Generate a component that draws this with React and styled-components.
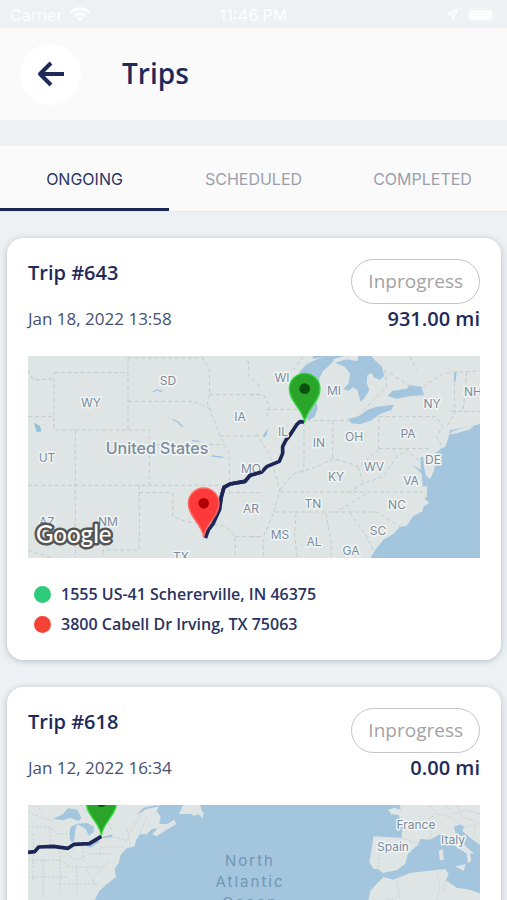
import React, { useState } from "react";
import styled, { createGlobalStyle } from "styled-components";

const GlobalStyle = createGlobalStyle`
  * { box-sizing: border-box; }
  body {
    margin: 0;
    background: #edf1f4;
    font-family: 'Open Sans', 'Noto Sans', sans-serif;
    color: #1f2a5a;
  }
  button {
    font: inherit;
    border: none;
    padding: 0;
    cursor: pointer;
  }
  h1, h2, p, ul { margin: 0; padding: 0; font-weight: inherit; }
`;
const Screen = styled.div`
  display: flex;
  flex-direction: column;
  height: 100vh;
`;
const StatusBar = styled.div`
  display: grid;
  grid-template-columns: 1fr auto 1fr;
  align-items: center;
  flex: none;
  height: 28px;
  padding: 1px 10px 0;
  color: #fcfdfd;
  font-family: Inter, sans-serif;
  font-size: 16px;
`;
const StatusSide = styled.div`
  display: flex;
  align-items: center;
  justify-content: ${props => props.$end ? "flex-end" : "flex-start"};
  gap: 8px;
`;
const Clock = styled.span`
  font-weight: 500;
`;
const Header = styled.header`
  display: flex;
  align-items: center;
  flex: none;
  gap: 41px;
  height: 92px;
  padding: 0 20px;
  background: #fafafa;
`;
const BackButton = styled.button`
  display: flex;
  align-items: center;
  justify-content: center;
  width: 61px;
  height: 61px;
  border-radius: 50%;
  background: #fff;
`;
const Title = styled.h1`
  padding-bottom: 3px;
  font-size: 28px;
  line-height: 36px;
  font-weight: 600;
`;
const Tabs = styled.div`
  display: flex;
  flex: none;
  height: 66px;
  margin-top: 26px;
  background: #fafafa;
  border-bottom: 1px solid #e6e9ed;
`;
const Tab = styled.button`
  flex: 1;
  background: none;
  font-family: Inter, sans-serif;
  font-size: 16px;
  color: ${props => props.$active ? "#2b3563" : "#9a9fae"};
  border-top: 3px solid transparent;
  border-bottom: 3px solid ${props => props.$active ? "#1c2753" : "transparent"};
`;
const List = styled.main`
  display: flex;
  flex-direction: column;
  flex: 1;
  gap: 27px;
  min-height: 0;
  padding: 26px 6px 26px 7px;
  overflow-y: auto;
  scrollbar-width: none;
`;
const Card = styled.article`
  flex: none;
  padding: 21px;
  background: #fff;
  border-radius: 16px;
  box-shadow: 0 1px 6px rgba(60, 70, 80, 0.3);
`;
const CardHead = styled.div`
  display: flex;
  justify-content: space-between;
  padding-bottom: 23px;
`;
const HeadColumn = styled.div`
  display: flex;
  flex-direction: column;
  align-items: ${props => props.$end ? "flex-end" : "flex-start"};
  gap: ${props => props.$end ? "0" : "20px"};
`;
const TripName = styled.h2`
  font-size: 20px;
  line-height: 28px;
  font-weight: 600;
`;
const TripDate = styled.p`
  font-size: 17px;
  line-height: 24px;
  color: #474f72;
`;
const Badge = styled.span`
  padding: 6px 16px;
  border: 1px solid #c4c4c4;
  border-radius: 24px;
  font-size: 19px;
  line-height: 31px;
  color: #a3a3a3;
`;
const Miles = styled.p`
  font-size: 20px;
  line-height: 29px;
  font-weight: 600;
`;
const MapView = styled.svg`
  display: block;
  width: 100%;
  height: 202px;
`;
const MapLabel = styled.text`
  font-family: Inter, sans-serif;
  font-size: ${props => props.$size || 12}px;
  font-weight: ${props => props.$bold ? 500 : 400};
  fill: #7c8b9b;
  stroke: #f1f5f5;
  stroke-width: 3px;
  stroke-linejoin: round;
  paint-order: stroke;
  text-anchor: middle;
  dominant-baseline: central;
`;
const OceanLabel = styled.text`
  font-family: Inter, sans-serif;
  font-size: 15px;
  letter-spacing: 2px;
  fill: #7496b2;
  text-anchor: middle;
  dominant-baseline: central;
`;
const GoogleLabel = styled.text`
  font-family: Lato, sans-serif;
  font-size: 24px;
  font-weight: 500;
  fill: #fff;
  stroke: #555;
  stroke-width: 5px;
  stroke-linejoin: round;
  paint-order: stroke;
`;
const Stops = styled.ul`
  display: flex;
  flex-direction: column;
  gap: 6px;
  padding: 24px 6px 3px;
  list-style: none;
`;
const Stop = styled.li`
  display: flex;
  align-items: center;
  gap: 10px;
  font-size: 16px;
  line-height: 24px;
  font-weight: 600;
  color: #2a3360;
  &::before {
    content: "";
    width: 17px;
    height: 17px;
    border-radius: 50%;
    background: ${props => props.$color};
  }
`;

const LAND = "#dee5e4";
const WATER = "#a3c5de";

const states = [
  ["SD", 140, 24], ["WY", 63, 46], ["UT", 19, 101], ["AZ", 19, 165], ["NM", 80, 165],
  ["IA", 212, 60], ["MO", 223, 112], ["AR", 223, 152], ["TX", 153, 200], ["WI", 254, 21],
  ["MI", 306, 34], ["IL", 255, 75], ["IN", 291, 86], ["OH", 326, 80], ["PA", 380, 77],
  ["NY", 404, 47], ["NH", 445, 35], ["DE", 405, 103], ["WV", 346, 110], ["KY", 308, 120],
  ["VA", 383, 124], ["TN", 285, 147], ["NC", 369, 148], ["SC", 350, 174], ["MS", 252, 178],
  ["AL", 286, 185], ["GA", 323, 194],
];

// x and y are the tip of the pin
function Pin({ x, y, fill, edge, dot }) {
  return (
    <g transform={`translate(${x} ${y})`}>
      <path
        d="M0 0C-3 -38 -46 -62 -46 -102A46 46 0 0 1 46 -102C46 -62 3 -38 0 0Z"
        fill={fill}
        stroke={edge}
        strokeWidth="4"
      />
      <circle cy="-102" r="16" fill={dot} />
    </g>
  );
}

function StatesMap() {
  return (
    <MapView viewBox="0 0 452 202" preserveAspectRatio="xMidYMid slice" role="img" aria-label="Route map">
      <rect width="452" height="202" fill={LAND} />
      <g transform="scale(0.33333)" fill="none">
        {/* lakes and ocean */}
        <g transform="translate(666 -18)" fill={WATER}>
          <path d="M148 66L168 44L200 28L228 20L252 30L240 44L220 62L208 84L206 110L196 140L203 175L194 200L178 210L164 204L150 120Z" />
          <path d="M186 16H290L262 24L240 32L222 22L190 26Z" />
          <path d="M256 38L290 28L322 34L326 16H362L374 30L396 50L402 78L390 90L372 82L364 68L352 76L350 98L358 120L345 142L332 156L322 120L308 112L296 122L280 118L296 100L300 70L284 50Z" />
          <path d="M294 206L318 202L330 196L352 180L380 170L432 164L424 180L390 192L362 212L330 222L304 220Z" />
          <path d="M412 138L428 122L470 116L480 106L515 110L522 136L480 138L440 146Z" />
          <path d="M690 222L650 232L600 240L596 262L586 290L572 296L556 310L556 340L552 362L540 388L528 376L532 410L530 440L524 446L538 458L520 470L518 484L490 498L470 528L450 530L430 552L400 570L376 600L360 626H692V222Z" />
          <path d="M512 320L520 322L522 350L528 380L532 408L518 410L516 372L488 346L512 360Z" />
          <path d="M612 64L620 66L616 100L612 90ZM38 258L54 234L50 254L42 264Z" />
          <path d="M596 254L610 242L672 226L660 238L620 250Z" fill={LAND} />
        </g>
        <g transform="translate(-24 -18)">
          <path d="M42 218L60 228L64 244L50 246Z" fill="#8fc0d8" />
          <path d="M398 126L410 120L428 124M458 208L474 216L488 230M516 272L538 274M576 318L610 322" stroke="#9fc3e2" strokeWidth="4" />
        </g>

        {/* state lines */}
        <g stroke="#c3cbcd" strokeWidth="3" strokeDasharray="12 8">
          <path
            transform="translate(-24 -18)"
            d="M102 68H324V240H102ZM24 60L40 90L102 86M24 200H102M324 24H548L568 60V134L562 160L574 190L600 258L628 310V426M324 24V70M324 154H520L570 176M568 134H720M600 258H720M324 240H388V406M388 284H610M24 406H628M166 240V626M358 406V600H250V620M358 428H458V500L500 515L560 520L620 530L646 560V626M628 428H720M646 560H720M684 30L688 80L720 108M24 600L100 626"
          />
          <path
            transform="translate(666 -18)"
            d="M162 218V340L158 370M248 212V330M170 212H300M386 206V296M386 200H558L578 228L560 260L576 290M386 296H540M90 426H520M75 486H380L450 530M138 490L134 560L142 626M228 490L244 580V626M300 490L350 560L370 600M50 178H160M0 134H40L60 170L50 200M20 250L60 320L72 360L90 420L70 490L40 560V626M90 420L130 372L200 350L250 326L300 340L324 350L386 300M324 350L340 400L400 380L440 320L470 300L512 336M340 400L300 426M270 480L350 430M0 560H40M614 100V190L590 230M520 110L580 70L690 62M650 66L640 180M604 184H690M404 60L410 110L330 190M420 70L500 120M160 20L130 60M480 20L500 60"
          />
        </g>
        <path
          d="M532 546L541 522L556 502L574 462L580 422L588 394L606 384L651 376L666 358L701 348L716 332L754 316L764 292L764 272L774 252L786 237L806 206L816 197L828 198"
          stroke="#1c2657"
          strokeWidth="11"
          strokeLinejoin="round"
        />
      </g>
      {states.map(([name, x, y]) => (
        <MapLabel key={name} x={x} y={y}>{name}</MapLabel>
      ))}
      <MapLabel x="129" y="92" $size={16} $bold>United States</MapLabel>
      <GoogleLabel x="8" y="187">Google</GoogleLabel>
      <g transform="scale(0.33333)">
        <path d="M574 462L580 422L588 394L606 384L651 376L666 358L701 348" fill="none" stroke="#1c2657" strokeWidth="11" strokeLinejoin="round" />
        <Pin x={527} y={544} fill="#fd3a3a" edge="#ff6a66" dot="#b00000" />
        <Pin x={830} y={200} fill="#2aa52a" edge="#35d83f" dot="#0b520f" />
      </g>
    </MapView>
  );
}

function AtlanticMap() {
  return (
    <MapView viewBox="0 0 452 202" preserveAspectRatio="xMidYMid slice" role="img" aria-label="Route map">
      <rect width="452" height="202" fill={WATER} />
      <g transform="scale(0.33333)" fill="none">
        <g transform="translate(-84 -374)">
          <path
            fill={LAND}
            d="M84 374H478L470 392L482 410L478 430L500 432L524 418L528 432L500 448L470 468L456 462L474 444L456 446L440 462L420 462L408 480L404 498L380 504L362 524L356 548L344 566L348 590L320 612L298 632L284 660L290 720L270 730L250 680L84 700ZM550 374H600L606 392L612 400L606 414L596 402L580 406L572 400L536 402Z"
          />
          <path
            fill={WATER}
            d="M160 416L190 400L204 384L232 388L244 412L236 422L210 412L190 420ZM212 440L232 430L226 450L222 482L212 484L208 462ZM230 430L262 428L282 440L280 456L266 466L258 446L244 438ZM256 496L290 480L302 482L272 502ZM306 470L338 462L336 470L310 474ZM408 404L430 382L470 374L478 378L440 386Z"
          />
          <path
            stroke="#c0c8ca"
            strokeWidth="2"
            strokeDasharray="7 5"
            d="M84 396L120 410L160 420M110 374L130 400M84 440H150L170 460H210M150 440V500M100 460V600M84 540H180L210 556M130 540V650M180 500V640M84 590H200M200 520L230 540L270 520H330M220 484V520M250 500V540M200 560H320M230 560V640M260 566L290 620M180 610H290M300 520V500H370M340 470L380 480L400 440L430 390M340 374L320 420L336 450M390 490L380 440M420 460L440 410M330 540L280 590M240 374L290 420"
          />
          <path d="M84 516L104 514L116 500L160 498L204 504L222 492L268 490L304 468" stroke="#1c2657" strokeWidth="11" strokeLinejoin="round" />
          <Pin x={304} y={466} fill="#2aa52a" edge="#35d83f" dot="#0b520f" />
        </g>
        <g transform="translate(666 -374)">
          <path
            fill={LAND}
            d="M450 374L452 388L432 382L414 388L424 402L446 404L458 440L454 472L370 468L366 500L358 546L370 566L384 566L398 578L440 570L466 550L474 520L506 492L510 476L540 478L570 462L590 468L620 500L650 520L654 550L664 540L660 520L672 520L640 490L618 462L612 440L630 436L640 456L670 480L692 495V374ZM616 558L648 552L640 572ZM566 512L578 506L582 538L570 540ZM400 590L430 598L480 578L586 566L596 580L588 600L620 622L660 628L692 640V720H340L362 630Z"
          />
          <path fill={WATER} d="M612 440L630 432L644 440L636 450L646 464L620 460Z" />
          <path
            stroke="#c0c8ca"
            strokeWidth="2"
            strokeDasharray="7 5"
            d="M454 472L506 490M380 490L392 500L384 566M540 478L548 440L530 420L560 400L600 410L630 430M560 400L540 374M590 374L610 400L650 390L690 400M620 374L640 410L690 430M650 440L680 430L670 470M440 600L450 650L400 662M560 570L570 620L560 662M586 600L580 640"
          />
        </g>
      </g>
      <MapLabel x="388" y="19">France</MapLabel>
      <MapLabel x="365" y="41">Spain</MapLabel>
      <MapLabel x="425" y="34">Italy</MapLabel>
      <OceanLabel x="222" y="55">North</OceanLabel>
      <OceanLabel x="222" y="76">Atlantic</OceanLabel>
      <OceanLabel x="222" y="97">Ocean</OceanLabel>
    </MapView>
  );
}

const trips = [
  {
    id: 643,
    date: "Jan 18, 2022 13:58",
    miles: "931.00 mi",
    Map: StatesMap,
    from: "1555 US-41 Schererville, IN 46375",
    to: "3800 Cabell Dr Irving, TX 75063",
  },
  {
    id: 618,
    date: "Jan 12, 2022 16:34",
    miles: "0.00 mi",
    Map: AtlanticMap,
  },
];

function TripCard({ trip }) {
  const { Map } = trip;
  return (
    <Card>
      <CardHead>
        <HeadColumn>
          <TripName>Trip #{trip.id}</TripName>
          <TripDate>{trip.date}</TripDate>
        </HeadColumn>
        <HeadColumn $end>
          <Badge>Inprogress</Badge>
          <Miles>{trip.miles}</Miles>
        </HeadColumn>
      </CardHead>
      <Map />
      {trip.from &&
        <Stops>
          <Stop $color="#2ecc7a">{trip.from}</Stop>
          <Stop $color="#f44336">{trip.to}</Stop>
        </Stops>
      }
    </Card>
  );
}

function App() {
  const [tab, setTab] = useState("ONGOING");
  return (
    <>
      <GlobalStyle />
      <Screen>
        <StatusBar>
          <StatusSide>
            <span>Carrier</span>
            <svg width="20" height="15" viewBox="0 0 20 15" fill="none" stroke="currentColor" strokeWidth="3">
              <path d="M1 5.5C6 .6 14 .6 19 5.5M4.500 9C7.600 6 12.400 6 15.500 9" />
              <path d="M10 14.500L7 11.500C8.700 10 11.300 10 13 11.500Z" fill="currentColor" stroke="none" />
            </svg>
          </StatusSide>
          <Clock>11:46 PM</Clock>
          <StatusSide $end>
            <svg width="13" height="13" viewBox="0 0 13 13" fill="none" stroke="currentColor" strokeWidth="1.500" strokeLinejoin="round">
              <path d="M1.500 6.500L11.500 1.500L7 11.500V6.500Z" />
            </svg>
            <svg width="30" height="14" viewBox="0 0 30 14">
              <rect x="0.500" y="0.500" width="26" height="13" rx="4" fill="none" stroke="currentColor" opacity="0.5" />
              <rect x="2" y="2" width="23" height="10" rx="3" fill="currentColor" />
              <path d="M28 5V9Q29.500 8.500 29.500 7T28 5Z" fill="currentColor" opacity="0.5" />
            </svg>
          </StatusSide>
        </StatusBar>
        <Header>
          <BackButton aria-label="Back">
            <svg width="28" height="26" viewBox="0 0 28 26" fill="none" stroke="#1f2a5a" strokeWidth="4">
              <path d="M27 13H3M14 2L3 13L14 24" strokeLinejoin="round" />
            </svg>
          </BackButton>
          <Title>Trips</Title>
        </Header>
        <Tabs role="tablist">
          {["ONGOING", "SCHEDULED", "COMPLETED"].map(name => (
            <Tab
              key={name}
              role="tab"
              aria-selected={tab === name}
              $active={tab === name}
              onClick={() => setTab(name)}
            >
              {name}
            </Tab>
          ))}
        </Tabs>
        <List>
          {trips.map(trip => <TripCard key={trip.id} trip={trip} />)}
        </List>
      </Screen>
    </>
  );
}

export default App;
